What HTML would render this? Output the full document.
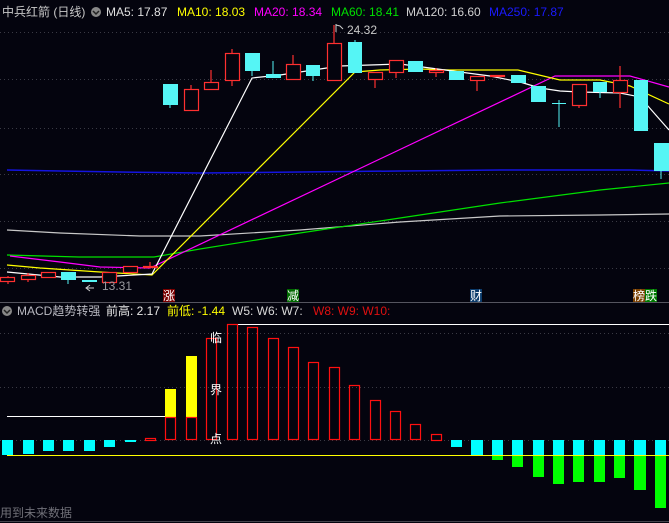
<!DOCTYPE html>
<html><head><meta charset="utf-8"><style>
html,body{margin:0;padding:0;background:#04040e;}
svg{display:block}
text{font-family:"Liberation Sans","Noto Sans CJK SC",sans-serif;font-size:12px}
</style></head><body>
<svg width="669" height="523" viewBox="0 0 669 523" xmlns="http://www.w3.org/2000/svg">
<rect width="669" height="523" fill="#04040e"/>
<!-- grid -->
<g stroke="#3a3a44" stroke-dasharray="1,3" stroke-width="1">
<line x1="0" y1="32.5" x2="669" y2="32.5"/><line x1="0" y1="79.5" x2="669" y2="79.5"/>
<line x1="0" y1="128.5" x2="669" y2="128.5"/><line x1="0" y1="174.5" x2="669" y2="174.5"/>
<line x1="0" y1="221.5" x2="669" y2="221.5"/><line x1="0" y1="268.5" x2="669" y2="268.5"/>
<line x1="0" y1="333.5" x2="669" y2="333.5"/><line x1="0" y1="387.5" x2="669" y2="387.5"/>
<line x1="0" y1="440.5" x2="669" y2="440.5"/>
</g>
<line x1="0" y1="302.5" x2="669" y2="302.5" stroke="#55555f"/>
<line x1="0" y1="521.5" x2="669" y2="521.5" stroke="#44444c"/>
<!-- header -->
<text x="2" y="16" fill="#c8c8c8">中兵红箭 (日线)</text>
<circle cx="96" cy="12" r="5" fill="#888"/><path d="M93 11 l3 3 l3 -3" stroke="#222" stroke-width="1.5" fill="none"/>
<text x="106" y="16" fill="#e0e0e0">MA5: 17.87</text>
<text x="177" y="16" fill="#ffff00">MA10: 18.03</text>
<text x="254" y="16" fill="#ff00ff">MA20: 18.34</text>
<text x="331" y="16" fill="#00e000">MA60: 18.41</text>
<text x="406" y="16" fill="#d0d0d0">MA120: 16.60</text>
<text x="489" y="16" fill="#1a1aff">MA250: 17.87</text>
<!-- MAs -->
<g fill="none" stroke-width="1.2">
<polyline stroke="#1414e0" stroke-width="1.5" points="7,170 60,171 120,172 200,173 300,172 400,171 500,170 630,170 669,171"/>
<polyline stroke="#c8c8c8" points="7,230 60,233 140,236 200,236 300,230 400,222 500,216 600,215 669,214"/>
<polyline stroke="#00e000" points="7,255 79,257 154,257 200,249 300,233 400,218 500,203 600,190 669,183"/>
<polyline stroke="#ff00ff" points="10,256 60,262 100,267 150,268 555,76 600,76 630,76 669,87"/>
<polyline stroke="#ffff00" points="7,265 40,268 100,272 152,275 355,72 380,70 420,69 450,70 518,70 560,80 600,80 630,86 669,104"/>
<polyline stroke="#ffffff" points="7,272 60,277 100,277 152,274 252,78 280,75 340,66 370,65 400,64 430,68 460,72 490,76 520,82 540,88 560,91 580,92 620,93 640,97 669,130"/>
</g>
<!-- candles -->
<g stroke="#ff3030" fill="#04040e" stroke-width="1.2">
<line x1="8" y1="276" x2="8" y2="284"/><rect x="0.5" y="277.5" width="14" height="4"/>
<line x1="28" y1="273" x2="28" y2="282"/><rect x="21.5" y="275.5" width="14" height="4"/>
<rect x="41.5" y="272.5" width="14" height="5"/>
<rect x="102.5" y="272.5" width="14" height="10"/>
<rect x="123.5" y="266.5" width="14" height="6"/>
<line x1="150" y1="262" x2="150" y2="267"/><rect x="143.5" y="266.5" width="14" height="1"/>
<line x1="191" y1="85" x2="191" y2="89"/><rect x="184.5" y="89.5" width="14" height="21"/>
<line x1="211" y1="70" x2="211" y2="82"/><rect x="204.5" y="82.5" width="14" height="7"/>
<line x1="232" y1="49" x2="232" y2="86"/><rect x="225.5" y="53.5" width="14" height="27"/>
<line x1="293" y1="55" x2="293" y2="64"/><rect x="286.5" y="64.5" width="14" height="15"/>
<line x1="334" y1="25" x2="334" y2="43"/><rect x="327.5" y="43.5" width="14" height="37"/>
<line x1="375" y1="79" x2="375" y2="88"/><rect x="368.5" y="72.5" width="14" height="7"/>
<line x1="396" y1="72" x2="396" y2="78"/><rect x="389.5" y="60.5" width="14" height="12"/>
<line x1="436" y1="68" x2="436" y2="77"/><rect x="429.5" y="70.5" width="14" height="2"/>
<line x1="477" y1="80" x2="477" y2="91"/><rect x="470.5" y="76.5" width="14" height="4"/>
<rect x="490.5" y="75.5" width="14" height="1"/>
<line x1="579" y1="105" x2="579" y2="108"/><rect x="572.5" y="84.5" width="14" height="21"/>
<line x1="620" y1="66" x2="620" y2="108"/><rect x="613.5" y="80.5" width="14" height="12"/>
</g>
<g fill="#55f5f5" stroke="#55f5f5">
<line x1="68" y1="280" x2="68" y2="284"/><rect x="61" y="272" width="15" height="8" stroke="none"/>
<rect x="82" y="280" width="15" height="2" stroke="none"/>
<line x1="170" y1="105" x2="170" y2="108"/><rect x="163" y="84" width="15" height="21" stroke="none"/>
<line x1="252" y1="71" x2="252" y2="76"/><rect x="245" y="53" width="15" height="18" stroke="none"/>
<line x1="273" y1="61" x2="273" y2="74"/><rect x="266" y="74" width="15" height="4" stroke="none"/>
<line x1="313" y1="76" x2="313" y2="81"/><rect x="306" y="65" width="14" height="11" stroke="none"/>
<line x1="355" y1="40" x2="355" y2="42"/><rect x="348" y="42" width="14" height="31" stroke="none"/>
<rect x="408" y="61" width="15" height="11" stroke="none"/>
<rect x="449" y="71" width="15" height="9" stroke="none"/>
<rect x="511" y="75" width="15" height="8" stroke="none"/>
<rect x="531" y="86" width="15" height="16" stroke="none"/>
<line x1="559" y1="100" x2="559" y2="127"/><line x1="552" y1="103.5" x2="566" y2="103.5"/>
<line x1="600" y1="92" x2="600" y2="98"/><rect x="593" y="82" width="14" height="10" stroke="none"/>
<rect x="634" y="80" width="14" height="51" stroke="none"/>
<line x1="661" y1="171" x2="661" y2="179"/><rect x="654" y="143" width="15" height="28" stroke="none"/>
</g>
<path d="M336 24 l0 8 M336 25 l4 1 l3 3" stroke="#ccc" fill="none"/>
<text x="347" y="34" fill="#c8c8c8">24.32</text>
<path d="M90 285 l-4 3 l4 3 M86 288 h8" stroke="#ccc" fill="none"/>
<text x="102" y="290" fill="#9a9aa0">13.31</text>
<!-- tags -->
<rect x="163" y="289" width="12" height="13" fill="#7a0000"/><text x="163" y="300" fill="#fff">涨</text>
<rect x="287" y="289" width="12" height="13" fill="#006a00"/><text x="287" y="300" fill="#fff">减</text>
<rect x="470" y="289" width="12" height="13" fill="#0a3a6a"/><text x="470" y="300" fill="#fff">财</text>
<rect x="633" y="289" width="12" height="13" fill="#7a4000"/><text x="633" y="300" fill="#fff">榜</text>
<rect x="645" y="289" width="12" height="13" fill="#007a00"/><text x="645" y="300" fill="#fff">跌</text>
<!-- MACD header -->
<circle cx="7" cy="311" r="5" fill="#888"/><path d="M4 310 l3 3 l3 -3" stroke="#222" stroke-width="1.5" fill="none"/>
<text x="17" y="315" fill="#b8b8c0">MACD趋势转强</text>
<text x="106" y="315" fill="#e8e8e8">前高: 2.17</text>
<text x="167" y="315" fill="#ffff00">前低: -1.44</text>
<text x="232" y="315" fill="#d8d8d8">W5:  W6:  W7:</text>
<text x="313" y="315" fill="#e01010">W8:  W9:  W10:</text>
<!-- MACD lines -->
<line x1="7" y1="416.5" x2="176" y2="416.5" stroke="#fff"/>
<line x1="227" y1="324.5" x2="669" y2="324.5" stroke="#fff"/>
<line x1="7" y1="455.5" x2="669" y2="455.5" stroke="#ffff00"/>
<!-- MACD bars -->
<g fill="#00ffff">
<rect x="2" y="440" width="11" height="15"/><rect x="23" y="440" width="11" height="14"/>
<rect x="43" y="440" width="11" height="11"/><rect x="63" y="440" width="11" height="11"/>
<rect x="84" y="440" width="11" height="11"/><rect x="104" y="440" width="11" height="7"/>
<rect x="125" y="440" width="11" height="2"/><rect x="451" y="440" width="11" height="7"/>
<rect x="471" y="440" width="12" height="15"/><rect x="492" y="440" width="11" height="15"/>
<rect x="512" y="440" width="11" height="15"/><rect x="533" y="440" width="11" height="15"/>
<rect x="553" y="440" width="11" height="15"/><rect x="573" y="440" width="11" height="15"/>
<rect x="594" y="440" width="11" height="15"/><rect x="614" y="440" width="11" height="15"/>
<rect x="634" y="440" width="12" height="15"/><rect x="655" y="440" width="11" height="15"/>
</g>
<g fill="#00ff00">
<rect x="492" y="456" width="11" height="4"/><rect x="512" y="456" width="11" height="11"/>
<rect x="533" y="456" width="11" height="21"/><rect x="553" y="456" width="11" height="28"/>
<rect x="573" y="456" width="11" height="26"/><rect x="594" y="456" width="11" height="26"/>
<rect x="614" y="456" width="11" height="22"/><rect x="634" y="456" width="12" height="34"/>
<rect x="655" y="456" width="11" height="52"/>
</g>
<rect x="165" y="389" width="11" height="28" fill="#ffff00"/>
<rect x="186" y="356" width="11" height="61" fill="#ffff00"/>
<g fill="none" stroke="#ff1010" stroke-width="1.2">
<rect x="145.5" y="438.5" width="10" height="2"/>
<rect x="165.5" y="417.5" width="10" height="22"/>
<rect x="186.5" y="417.5" width="10" height="22"/>
<rect x="206.5" y="338.5" width="10" height="101"/>
<rect x="227.5" y="324.5" width="10" height="115"/>
<rect x="247.5" y="327.5" width="10" height="112"/>
<rect x="268.5" y="338.5" width="10" height="101"/>
<rect x="288.5" y="347.5" width="10" height="92"/>
<rect x="308.5" y="362.5" width="10" height="77"/>
<rect x="329.5" y="367.5" width="10" height="72"/>
<rect x="349.5" y="385.5" width="10" height="54"/>
<rect x="370.5" y="400.5" width="10" height="39"/>
<rect x="390.5" y="411.5" width="10" height="28"/>
<rect x="410.5" y="424.5" width="10" height="15"/>
<rect x="431.5" y="434.5" width="10" height="6"/>
</g>
<text x="210" y="342" fill="#fff">临</text>
<text x="210" y="394" fill="#fff">界</text>
<text x="210" y="443" fill="#fff">点</text>
<text x="0" y="517" fill="#707078">用到未来数据</text>
</svg>
</body></html>
